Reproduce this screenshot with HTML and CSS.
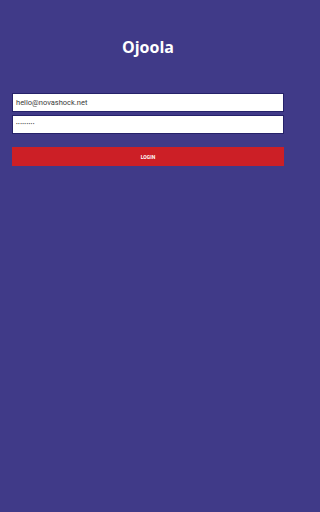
FILE: index.html
```
<!DOCTYPE html>
<html>
<head>
<meta charset="utf-8">
<link rel="stylesheet" href="styles.css">
</head>
<body>
<div class="page">
  <h1 class="title">Ojoola</h1>
  <form class="form">
    <div class="field field-email">hello@novashock.net</div>
    <div class="field field-pass">•••••••••</div>
    <button type="button" class="btn">LOGIN</button>
  </form>
</div>
</body>
</html>
```
FILE: styles.css
```
html, body {
  margin: 0;
  padding: 0;
  height: 100%;
}
body {
  background: #403a88;
  font-family: Roboto, "Liberation Sans", sans-serif;
}
.page {
  max-width: 296px;
  box-sizing: border-box;
  padding: 0 12px;
}
.title {
  margin: 0;
  padding-top: 36px;
  height: 57px;
  box-sizing: border-box;
  text-align: center;
  font-family: "Open Sans", "DejaVu Sans", sans-serif;
  font-weight: 700;
  font-size: 16px;
  line-height: 22px;
  color: #ffffff;
}
.form {
  display: flex;
  flex-direction: column;
}
.field {
  height: 19px;
  box-sizing: border-box;
  background: #ffffff;
  border: 1px solid #26226a;
  padding: 0 3px;
  font-size: 7.5px;
  line-height: 17px;
  color: #3a3a3a;
}
.field-email {
  margin-top: 36px;
}
.field-pass {
  margin-top: 3px;
  font-size: 5px;
  letter-spacing: 0.4px;
  color: #333;
}
.btn {
  margin-top: 13px;
  height: 19px;
  border: none;
  background: #cc1f26;
  color: #ffffff;
  font-family: Roboto, "Liberation Sans", sans-serif;
  font-weight: 700;
  font-size: 5px;
  padding: 0;
}
```
